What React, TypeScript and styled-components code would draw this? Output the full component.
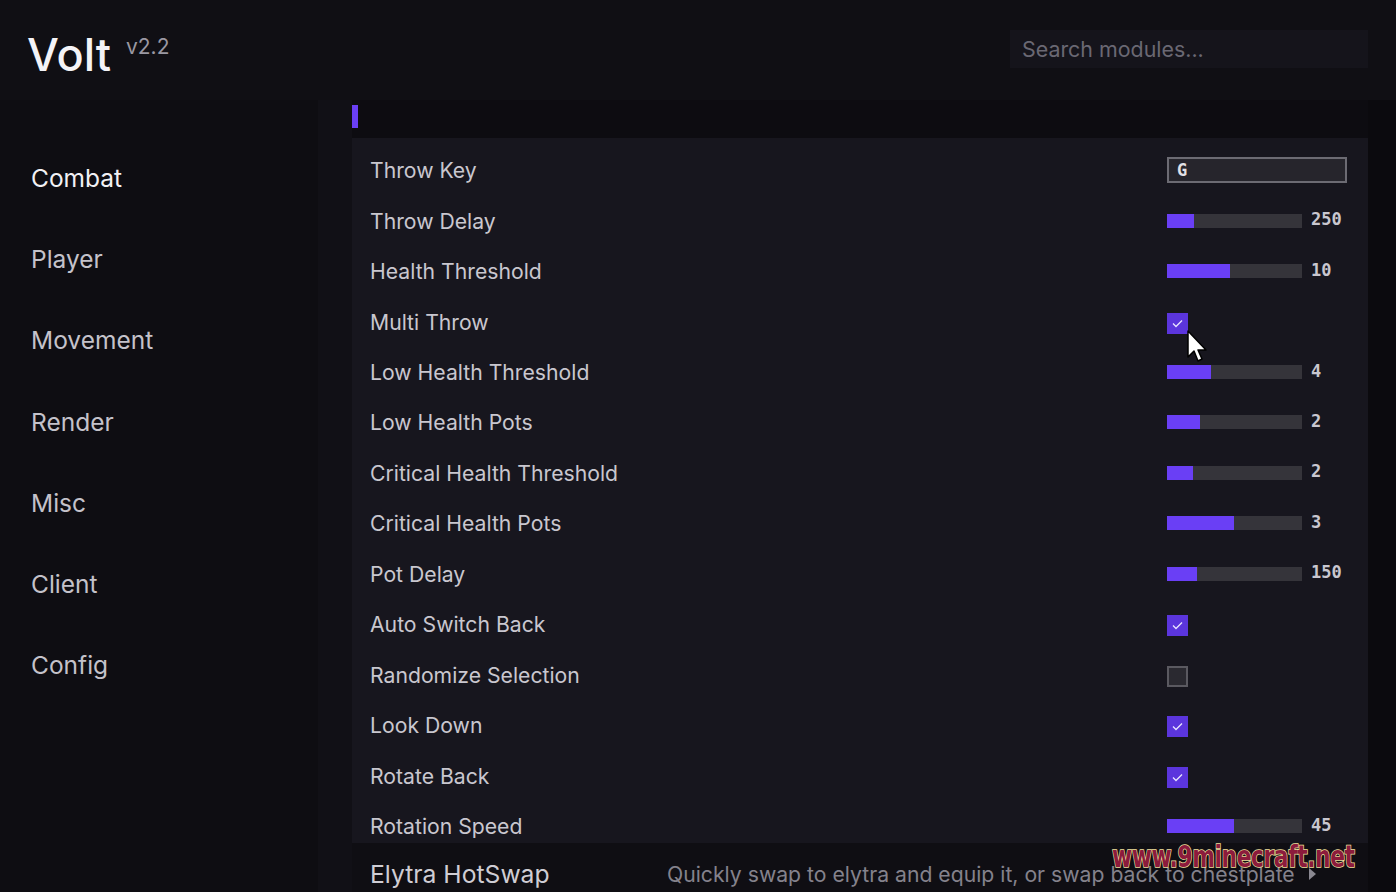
import React from "react";
import styled, { createGlobalStyle } from "styled-components";

const Global = createGlobalStyle`
  html, body { margin: 0; padding: 0; background: #0f0e13; }
  body { font-family: Inter, "Noto Sans", sans-serif; overflow: hidden; }
  * { box-sizing: border-box; }
`;

const Page = styled.div`
  position: relative;
  width: 1396px;
  height: 892px;
  overflow: hidden;
  display: grid;
  grid-template-rows: 100px 1fr;
  background: #0f0e13;
  color: #c9c7cf;
`;

const Header = styled.header`
  display: flex;
  align-items: center;
  justify-content: space-between;
  padding: 0 28px 0 27px;
  background: #100f14;
`;

const Brand = styled.div`
  display: flex;
  align-items: flex-start;
  gap: 15px;
  margin-top: 8px;
`;

const Logo = styled.span`
  font-size: 45px;
  font-weight: 500;
  color: #f4f3f7;
  line-height: 1;
`;

const Version = styled.span`
  font-size: 21px;
  color: #9a98a2;
  line-height: 1;
  margin-top: 4px;
`;

const Search = styled.div`
  width: 358px;
  height: 38px;
  margin-top: -2px;
  background: #15141b;
  display: flex;
  align-items: center;
  padding-left: 12px;
  font-size: 21.4px;
  color: #6a6873;
`;

const Body = styled.div`
  display: grid;
  grid-template-columns: 318px 1fr;
  min-height: 0;
`;

const Sidebar = styled.nav`
  background: #0e0d12;
  display: flex;
  flex-direction: column;
  padding: 62px 0 0 31px;
`;

const NavItem = styled.div<{ $active?: boolean }>`
  height: 81.2px;
  font-size: 24.5px;
  color: ${(p) => (p.$active ? "#f2f1f5" : "#c4c2ca")};
  line-height: 32px;
`;

const Main = styled.main`
  background: #111016;
  display: flex;
  min-height: 0;
  padding-left: 34px;
`;

const Column = styled.div`
  width: 1016px;
  display: flex;
  flex-direction: column;
  min-height: 0;
`;

const Gutter = styled.div`
  flex: 1;
  background: #0b0a0e;
`;

const ModuleStrip = styled.div`
  height: 38px;
  flex: none;
  background: #0d0c11;
  display: flex;
  align-items: flex-start;
  padding-top: 5px;
`;

const Accent = styled.div`
  width: 6px;
  height: 23px;
  background: #6a3ff5;
`;

const Panel = styled.section`
  height: 705px;
  flex: none;
  overflow: hidden;
  background: #17161e;
  padding: 7px 0 0 18px;
`;

const Row = styled.div`
  height: 50.46px;
  display: grid;
  grid-template-columns: 797px 1fr;
  align-items: center;
`;

const Label = styled.span`
  font-size: 21.2px;
  color: #c9c7cf;
`;

const Control = styled.div`
  display: flex;
  align-items: center;
  gap: 9px;
`;

const KeyInput = styled.div`
  width: 180px;
  height: 26px;
  border: 2px solid #6c6b73;
  background: #26252c;
  display: flex;
  align-items: center;
  padding-left: 8px;
  font-family: "DejaVu Sans Mono", monospace;
  font-weight: bold;
  font-size: 17px;
  color: #e2e1e6;
`;

const Track = styled.div`
  width: 135px;
  height: 14px;
  background: #35343a;
  display: flex;
`;

const Fill = styled.div`
  height: 100%;
  background: #6a3ff5;
`;

const Value = styled.span`
  font-family: "DejaVu Sans Mono", monospace;
  font-weight: bold;
  font-size: 17px;
  color: #c9c7cf;
  margin-top: -3px;
`;

const Box = styled.div<{ $checked: boolean }>`
  width: 21px;
  height: 21px;
  margin-top: 3px;
  background: ${(p) => (p.$checked ? "#5b35dd" : "#2a2930")};
  border: ${(p) => (p.$checked ? "none" : "2px solid #5a5960")};
  display: flex;
  align-items: center;
  justify-content: center;
`;

const ModuleRow = styled.div`
  flex: 1;
  background: #0f0e13;
  display: flex;
  align-items: center;
  padding: 12px 0 0 18px;
`;

const ModuleName = styled.span`
  font-size: 24.7px;
  color: #cfcdd4;
  width: 297px;
`;

const ModuleDesc = styled.span`
  font-size: 21.2px;
  color: #84828c;
`;

const Caret = styled.span`
  margin-left: 14px;
  width: 0;
  height: 0;
  border-top: 6px solid transparent;
  border-bottom: 6px solid transparent;
  border-left: 7px solid #8a8891;
`;

const Cursor = styled.svg`
  position: absolute;
  left: 1186px;
  top: 329px;
`;

const Watermark = styled.div`
  position: absolute;
  left: 1112px;
  top: 838px;
  font-family: "Liberation Sans Narrow", "DejaVu Sans Condensed", "Liberation Sans", sans-serif;
  font-weight: bold;
  font-size: 31px;
  letter-spacing: -0.5px;
  color: #8c1b3c;
  -webkit-text-stroke: 1.5px #f3e3a0;
  paint-order: stroke fill;
  transform: scaleX(0.78);
  transform-origin: left top;
`;

type Setting =
  | { label: string; kind: "key"; value: string }
  | { label: string; kind: "slider"; value: string; fill: number }
  | { label: string; kind: "check"; checked: boolean };

const settings: Setting[] = [
  { label: "Throw Key", kind: "key", value: "G" },
  { label: "Throw Delay", kind: "slider", value: "250", fill: 27 },
  { label: "Health Threshold", kind: "slider", value: "10", fill: 63 },
  { label: "Multi Throw", kind: "check", checked: true },
  { label: "Low Health Threshold", kind: "slider", value: "4", fill: 44 },
  { label: "Low Health Pots", kind: "slider", value: "2", fill: 33 },
  { label: "Critical Health Threshold", kind: "slider", value: "2", fill: 26 },
  { label: "Critical Health Pots", kind: "slider", value: "3", fill: 67 },
  { label: "Pot Delay", kind: "slider", value: "150", fill: 30 },
  { label: "Auto Switch Back", kind: "check", checked: true },
  { label: "Randomize Selection", kind: "check", checked: false },
  { label: "Look Down", kind: "check", checked: true },
  { label: "Rotate Back", kind: "check", checked: true },
  { label: "Rotation Speed", kind: "slider", value: "45", fill: 67 },
];

const Check = () => (
  <svg width="11" height="9" viewBox="0 0 11 9">
    <path d="M1 4.5 L4 7.5 L10 1.5" fill="none" stroke="#e8e4ff" strokeWidth="1.3" />
  </svg>
);

const renderControl = (s: Setting) => {
  if (s.kind === "key") return <KeyInput>{s.value}</KeyInput>;
  if (s.kind === "slider")
    return (
      <>
        <Track>
          <Fill style={{ width: s.fill }} />
        </Track>
        <Value>{s.value}</Value>
      </>
    );
  return <Box $checked={s.checked}>{s.checked && <Check />}</Box>;
};

const nav = ["Combat", "Player", "Movement", "Render", "Misc", "Client", "Config"];

export default function App() {
  return (
    <Page>
      <Global />
      <Header>
        <Brand>
          <Logo>Volt</Logo>
          <Version>v2.2</Version>
        </Brand>
        <Search>Search modules...</Search>
      </Header>
      <Body>
        <Sidebar>
          {nav.map((n, i) => (
            <NavItem key={n} $active={i === 0}>
              {n}
            </NavItem>
          ))}
        </Sidebar>
        <Main>
          <Column>
            <ModuleStrip>
              <Accent />
            </ModuleStrip>
            <Panel>
              {settings.map((s) => (
                <Row key={s.label}>
                  <Label>{s.label}</Label>
                  <Control>{renderControl(s)}</Control>
                </Row>
              ))}
            </Panel>
            <ModuleRow>
              <ModuleName>Elytra HotSwap</ModuleName>
              <ModuleDesc>Quickly swap to elytra and equip it, or swap back to chestplate</ModuleDesc>
              <Caret />
            </ModuleRow>
          </Column>
          <Gutter />
        </Main>
      </Body>
      <Cursor width="24" height="36" viewBox="0 0 24 36">
        <path d="M2 2 L2 28 L8 22 L12 32 L16 30 L12 21 L20 21 Z" fill="#ffffff" stroke="#000" strokeWidth="1.5" strokeLinejoin="round" />
      </Cursor>
      <Watermark>www.9minecraft.net</Watermark>
    </Page>
  );
}
